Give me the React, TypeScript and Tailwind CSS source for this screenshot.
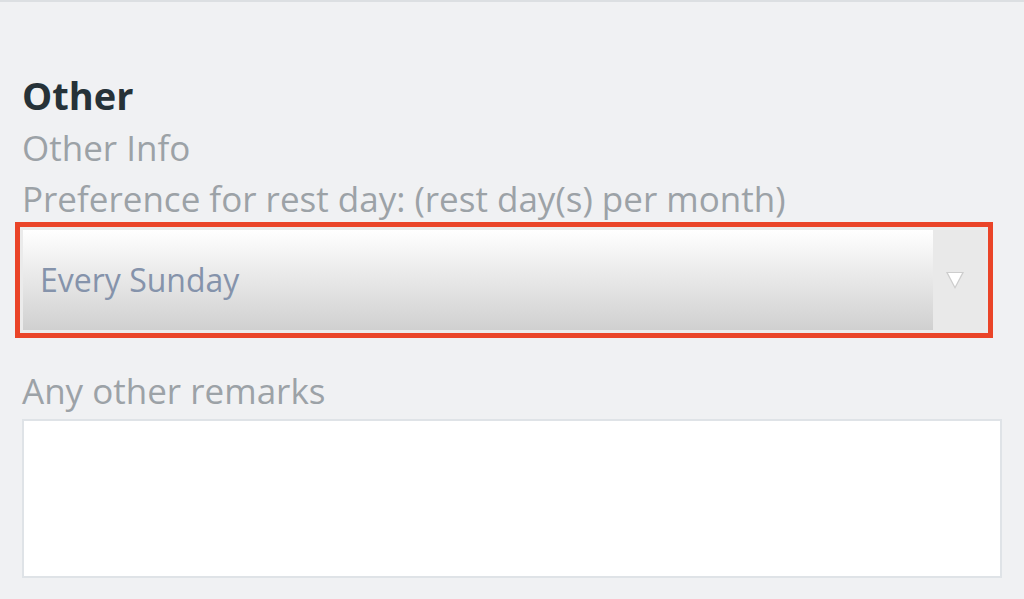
const App = () => {
  return (
    <div
      className="min-h-[599px] bg-[#f0f1f3] border-t-2 border-[#dcdfe2] px-[22px] pt-[74px]"
      style={{ fontFamily: '"Open Sans", "Noto Sans", sans-serif' }}
    >
      <h1 className="text-[38px] leading-[38px] font-bold text-[#263238]">Other</h1>
      <p className="mt-[16px] text-[35px] leading-[35px] text-[#9ca2a7]">Other Info</p>
      <p className="mt-[16px] text-[35px] leading-[35px] text-[#9ca2a7]">
        Preference for rest day: (rest day(s) per month)
      </p>

      <div className="mt-[6px] -ml-[7px] mr-[9px] border-[5px] border-[#ea4428]">
        <div className="border-[3px] border-[#ebebeb] flex h-[106px]">
          <div className="flex-1 flex items-center pl-[17px] bg-gradient-to-b from-[#ffffff] to-[#d0d0d0]">
            <span className="text-[32px] text-[#8593ab]">Every Sunday</span>
          </div>
          <div className="w-[52px] bg-[#e9e9e9] flex items-center justify-center pr-[8px]">
            <svg width="20" height="20" viewBox="0 0 20 20">
              <polygon points="1,2 19,2 10,19" fill="#cdcdcd" />
              <polygon points="3,3 17,3 10,16.5" fill="#ffffff" />
            </svg>
          </div>
        </div>
      </div>

      <p className="mt-[35px] text-[35px] leading-[35px] text-[#9ca2a7]">Any other remarks</p>
      <div className="mt-[11px] h-[159px] bg-white border-2 border-[#dfe3e7]" />
    </div>
  );
};

export default App;
